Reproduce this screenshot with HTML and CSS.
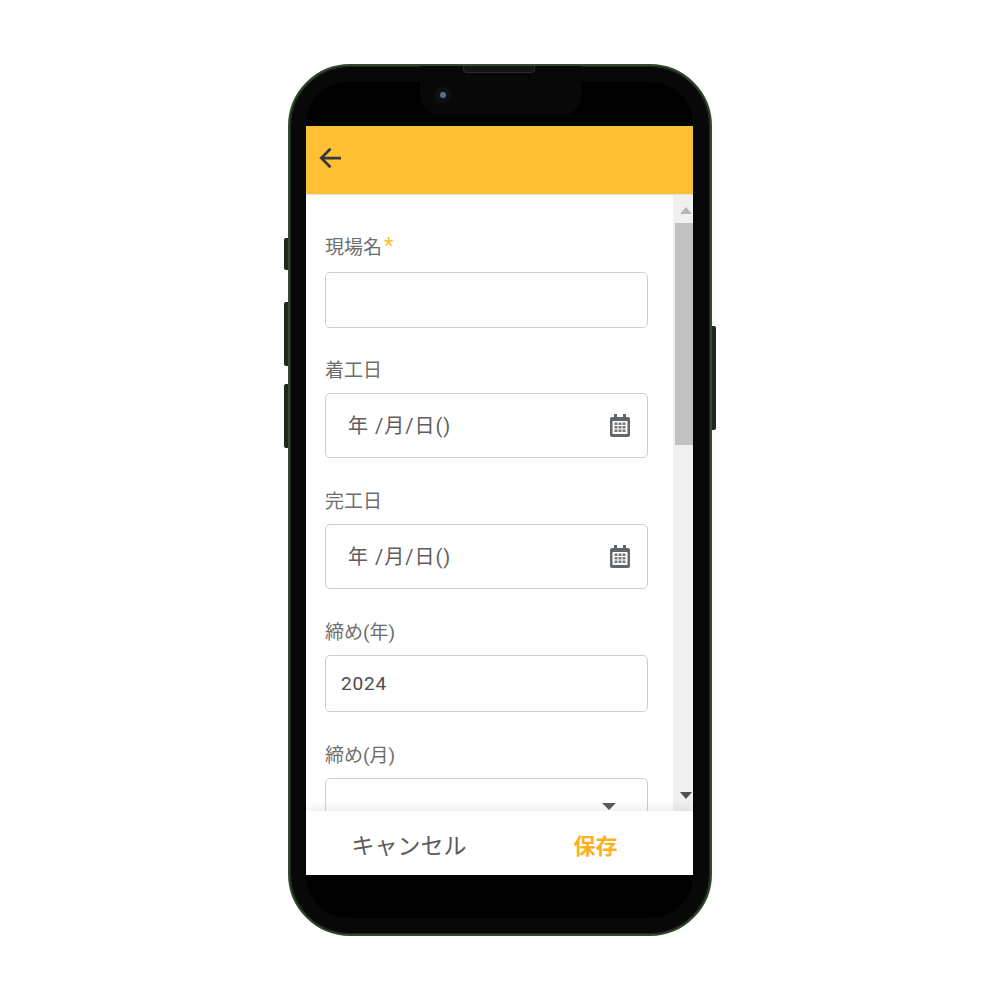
FILE: index.html
```html
<!DOCTYPE html>
<html lang="ja">

<head>
    <meta charset="UTF-8">
    <title>現場登録</title>
    <link rel="stylesheet" href="styles.css">
</head>

<body>
    <div class="phone">
        <span class="side-btn mute"></span>
        <span class="side-btn vol-up"></span>
        <span class="side-btn vol-down"></span>
        <span class="side-btn power"></span>
        <div class="notch"><span class="camera"></span></div>
        <span class="speaker"></span>

        <div class="screen">
            <div class="app-header">
                <svg class="back-icon" viewBox="0 0 24 24" width="30" height="30">
                    <path d="M20 12H4.6M11.6 4.6L4.2 12l7.4 7.4" fill="none" stroke="#37383a" stroke-width="2.200"/>
                </svg>
            </div>

            <div class="content">
                <form class="form">
                    <label class="field-label">現場名<span class="required">*</span></label>
                    <div class="input short first"></div>

                    <label class="field-label">着工日</label>
                    <div class="input tall">
                        <span class="date-text">年 /月/日()</span>
                        <svg class="calendar-icon" viewBox="0 0 20 23" width="20" height="23">
                            <path d="M2 3h16a2 2 0 0 1 2 2v16a2 2 0 0 1-2 2H2a2 2 0 0 1-2-2V5a2 2 0 0 1 2-2z" fill="#636669"/>
                            <path d="M4 0h3v5H4zM13 0h3v5h-3z" fill="#636669"/>
                            <rect x="2.500" y="7" width="15" height="13" fill="#fff"/>
                            <path d="M4.500 8.500h3v2.500h-3zM8.500 8.500h3v2.500h-3zM12.500 8.500h3v2.500h-3zM4.500 12h3v2.500h-3zM8.500 12h3v2.500h-3zM12.500 12h3v2.500h-3zM4.500 15.500h3V18h-3zM8.500 15.500h3V18h-3zM12.500 15.500h3V18h-3z" fill="#77797c"/>
                        </svg>
                    </div>

                    <label class="field-label">完工日</label>
                    <div class="input tall">
                        <span class="date-text">年 /月/日()</span>
                        <svg class="calendar-icon" viewBox="0 0 20 23" width="20" height="23">
                            <path d="M2 3h16a2 2 0 0 1 2 2v16a2 2 0 0 1-2 2H2a2 2 0 0 1-2-2V5a2 2 0 0 1 2-2z" fill="#636669"/>
                            <path d="M4 0h3v5H4zM13 0h3v5h-3z" fill="#636669"/>
                            <rect x="2.500" y="7" width="15" height="13" fill="#fff"/>
                            <path d="M4.500 8.500h3v2.500h-3zM8.500 8.500h3v2.500h-3zM12.500 8.500h3v2.500h-3zM4.500 12h3v2.500h-3zM8.500 12h3v2.500h-3zM12.500 12h3v2.500h-3zM4.500 15.500h3V18h-3zM8.500 15.500h3V18h-3zM12.500 15.500h3V18h-3z" fill="#77797c"/>
                        </svg>
                    </div>

                    <label class="field-label">締め(年)</label>
                    <div class="input short"><span class="value">2024</span></div>

                    <label class="field-label">締め(月)</label>
                    <div class="input short select"><span class="select-arrow"></span></div>
                </form>

                <div class="scrollbar">
                    <span class="arrow up"></span>
                    <div class="track"><div class="thumb"></div></div>
                    <span class="arrow down"></span>
                </div>
            </div>

            <div class="app-footer">
                <button class="btn cancel" type="button">キャンセル</button>
                <button class="btn save" type="button">保存</button>
            </div>
        </div>
    </div>
</body>

</html>
```

FILE: styles.css
```css
body {
    margin: 0;
    height: 1000px;
    background: white;
    display: flex;
    justify-content: center;
    align-items: flex-start;
    font-family: "Roboto", "Noto Sans CJK JP", sans-serif;
    overflow: hidden;
}

.phone {
    position: relative;
    width: 424px;
    height: 872px;
    margin-top: 64px;
    box-sizing: border-box;
    padding: 60px 17px 59px 16px;
    background: #080808;
    border: 2px solid #34492f;
    border-radius: 62px;
    box-shadow: inset 0 0 0 1px #1d2a1a;
}

.phone::before {
    content: "";
    position: absolute;
    top: 16px;
    left: 16px;
    right: 17px;
    bottom: 16px;
    background: black;
    border-radius: 42px;
}

.side-btn {
    position: absolute;
    width: 4px;
    background: #1e2a19;
    border-radius: 2px 0 0 2px;
}

.mute {
    left: -6px;
    top: 172px;
    height: 32px;
}

.vol-up {
    left: -6px;
    top: 236px;
    height: 64px;
}

.vol-down {
    left: -6px;
    top: 318px;
    height: 64px;
}

.power {
    right: -6px;
    top: 260px;
    height: 104px;
    border-radius: 0 2px 2px 0;
}

.speaker {
    position: absolute;
    top: 0;
    left: 173px;
    box-sizing: border-box;
    width: 72px;
    height: 7px;
    background: #141414;
    border: 1px solid #2b2b2b;
    border-top: none;
    border-radius: 0 0 4px 4px;
    z-index: 2;
}

.notch {
    position: absolute;
    top: 0;
    left: 130px;
    width: 162px;
    height: 49px;
    background: #080808;
    border-radius: 0 0 20px 20px;
    z-index: 1;
}

.camera {
    position: absolute;
    top: 26px;
    left: 20px;
    width: 6px;
    height: 6px;
    background: #5a7088;
    border-radius: 50%;
    box-shadow: 0 0 0 5px #101112;
}

.screen {
    position: relative;
    z-index: 1;
    height: 100%;
    display: flex;
    flex-direction: column;
    background: white;
}

.app-header {
    box-sizing: border-box;
    height: 69px;
    flex-shrink: 0;
    display: flex;
    align-items: center;
    padding: 0 0 5px 10px;
    background: #ffc034;
    border-bottom: 1px solid #dfe1e5;
}

.content {
    flex: 1;
    min-height: 0;
    display: flex;
    overflow: hidden;
}

.form {
    flex: 1;
    padding: 40px 25px 0 19px;
}

.field-label {
    display: block;
    height: 25px;
    line-height: 25px;
    font-size: 19px;
    color: #6e6e6e;
}

.required {
    margin-left: 2px;
    font-size: 22px;
    line-height: 20px;
    vertical-align: 1px;
    color: #ffc034;
}

.input {
    box-sizing: border-box;
    display: flex;
    align-items: center;
    justify-content: space-between;
    margin: 10px 0 31px;
    padding: 0 15px;
    background: white;
    border: 1px solid #ccced2;
    border-radius: 5px;
    color: #4d4d4d;
    font-size: 19px;
}

.short {
    height: 57px;
}

.first {
    height: 56px;
    margin: 12px 0 30px;
}

.tall {
    height: 65px;
    padding: 0 17px 0 22px;
}

.date-text {
    margin-top: -2px;
    font-size: 20px;
    letter-spacing: 1px;
    color: #5e5e5e;
}

.value {
    letter-spacing: 0.8px;
}

.select {
    position: relative;
}

.select-arrow {
    position: absolute;
    right: 31px;
    bottom: 24px;
    border-left: 7px solid transparent;
    border-right: 7px solid transparent;
    border-top: 7px solid #5c5c5c;
}

.scrollbar {
    width: 20px;
    flex-shrink: 0;
    display: flex;
    flex-direction: column;
    background: #f0f0f0;
}

.track {
    flex: 1;
    padding-left: 2px;
}

.thumb {
    height: 222px;
    margin-top: 9px;
    background: #c1c1c1;
}

.arrow {
    width: 0;
    margin-left: 7px;
    flex-shrink: 0;
    border-left: 6px solid transparent;
    border-right: 6px solid transparent;
}

.arrow.up {
    margin-top: 12px;
    border-bottom: 7px solid #b5b5b5;
}

.arrow.down {
    margin-bottom: 12px;
    border-top: 7px solid #505050;
}

.app-footer {
    height: 64px;
    flex-shrink: 0;
    display: flex;
    position: relative;
    background: white;
    box-shadow: 0 -3px 10px rgba(0, 0, 0, 0.08);
}

.btn {
    flex: 1;
    padding: 2px 0 0;
    border: none;
    background: none;
    font-family: inherit;
    font-size: 23px;
}

.cancel {
    flex: 0 0 206px;
    color: #5c5c5c;
}

.save {
    color: #ffb020;
    font-size: 22px;
    font-weight: bold;
    padding-right: 14px;
}
```
